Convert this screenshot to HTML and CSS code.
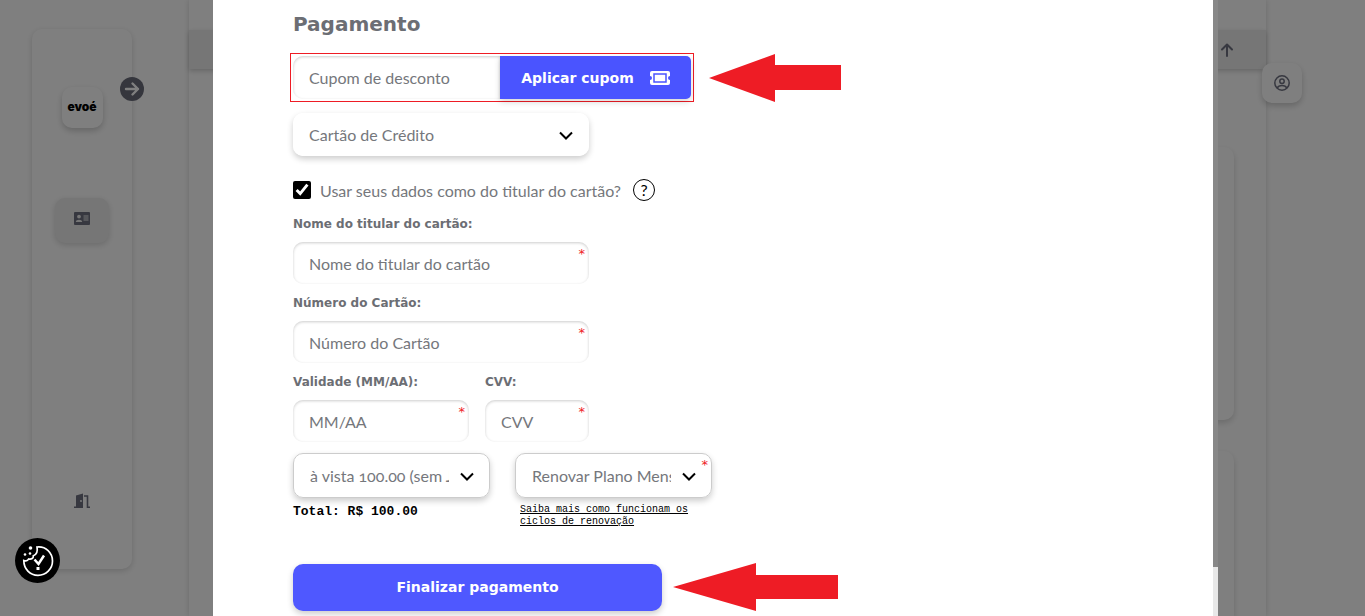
FILE: index.html
```html
<!DOCTYPE html>
<html lang="pt-BR">

<head>
    <meta charset="UTF-8">
    <meta name="viewport" content="width=device-width, initial-scale=1.0">
    <title>Pagamento</title>
    <link rel="stylesheet" href="styles.css">
</head>

<body>
    <div class="app">
        <aside class="sidebar">
            <div class="logo">evoé</div>
            <button type="button" class="expand" aria-label="Expandir menu">
                <svg width="24" height="24" viewBox="0 0 24 24">
                    <circle cx="12" cy="12" r="12" fill="#6a6c7a" />
                    <path d="M6 12h12M12.500 6.500L18 12l-5.500 5.500" fill="none" stroke="#fff" stroke-width="2.400" stroke-linecap="round" stroke-linejoin="round" />
                </svg>
            </button>
            <button type="button" class="menu-item" aria-label="Perfil">
                <svg width="16" height="13" viewBox="0 0 16 13">
                    <rect width="16" height="13" rx="1" fill="#6e7080" />
                    <circle cx="5" cy="4.600" r="1.900" fill="#ececec" />
                    <path d="M1.800 10c0-3 6.400-3 6.400 0zM9.500 3.500h5v1h-5zM9.500 5.500h5v1h-5zM9.500 7.500h5v1h-5z" fill="#ececec" />
                </svg>
            </button>
            <button type="button" class="exit" aria-label="Sair">
                <svg width="16" height="16" viewBox="0 0 16 16">
                    <path d="M2 2.500L9 0.500V15H0v-1.500h2z" fill="#6e7080" />
                    <path d="M10 3h3.500v11.200H16" fill="none" stroke="#6e7080" stroke-width="1.600" />
                    <circle cx="7" cy="8" r="0.900" fill="#fff" />
                </svg>
            </button>
        </aside>
        <main class="content">
            <div class="topbar">
                <svg width="14" height="14" viewBox="0 0 14 14">
                    <path d="M7 13V2M2 6.500l5-5 5 5" fill="none" stroke="#6e7080" stroke-width="2" stroke-linecap="round" stroke-linejoin="round" />
                </svg>
            </div>
            <div class="card"></div>
            <div class="card card-last"></div>
            <button type="button" class="user" aria-label="Minha conta">
                <svg width="16" height="16" viewBox="0 0 16 16" fill="none" stroke="#6e7080" stroke-width="1.500">
                    <circle cx="8" cy="8" r="7.200" />
                    <circle cx="8" cy="6.200" r="2.200" />
                    <path d="M3.300 13c1.500-3.200 7.900-3.200 9.400 0" />
                </svg>
            </button>
        </main>
    </div>

    <div class="overlay">
        <div class="modal">
            <form class="payment">
                <h2>Pagamento</h2>

                <div class="row">
                    <div class="coupon">
                        <input type="text" class="field" placeholder="Cupom de desconto" aria-label="Cupom de desconto">
                        <button type="button" class="apply">
                            Aplicar cupom
                            <svg width="20" height="14" viewBox="0 0 20 14">
                                <path d="M2 0h16a2 2 0 0 1 2 2v3a2 2 0 0 0 0 4v3a2 2 0 0 1-2 2H2a2 2 0 0 1-2-2V9a2 2 0 0 0 0-4V2a2 2 0 0 1 2-2z" fill="#fff" />
                                <rect x="4" y="3" width="12" height="8" fill="none" stroke="#4a54ff" stroke-width="1.500" />
                            </svg>
                        </button>
                    </div>
                    <svg class="arrow" width="132" height="49" viewBox="0 0 132 49">
                        <path d="M0 25L66 1v11h66v25H66v12z" fill="#ee1c25" />
                    </svg>
                </div>

                <div class="select method">
                    <select aria-label="Forma de pagamento">
                        <option>Cartão de Crédito</option>
                    </select>
                    <svg class="chevron" width="14" height="9" viewBox="0 0 14 9">
                        <path d="M1 1.500l6 6 6-6" />
                    </svg>
                </div>

                <div class="holder">
                    <input type="checkbox" id="holder" checked>
                    <label for="holder">Usar seus dados como do titular do cartão?</label>
                    <button type="button" class="help" aria-label="Ajuda">?</button>
                </div>

                <div class="group">
                    <label for="name">Nome do titular do cartão:</label>
                    <div class="required">
                        <input type="text" class="field" id="name" placeholder="Nome do titular do cartão">
                    </div>
                </div>
                <div class="group">
                    <label for="number">Número do Cartão:</label>
                    <div class="required">
                        <input type="text" class="field" id="number" placeholder="Número do Cartão">
                    </div>
                </div>
                <div class="split">
                    <div class="group validity">
                        <label for="validity">Validade (MM/AA):</label>
                        <div class="required">
                            <input type="text" class="field" id="validity" placeholder="MM/AA">
                        </div>
                    </div>
                    <div class="group cvv">
                        <label for="cvv">CVV:</label>
                        <div class="required">
                            <input type="text" class="field" id="cvv" placeholder="CVV">
                        </div>
                    </div>
                </div>

                <div class="plans">
                    <div class="plan">
                        <div class="select bordered">
                            <select aria-label="Parcelas">
                                <option>à vista 100.00 (sem Juros)</option>
                            </select>
                            <svg class="chevron" width="14" height="9" viewBox="0 0 14 9">
                                <path d="M1 1.500l6 6 6-6" />
                            </svg>
                        </div>
                        <p class="total">Total: R$ 100.00</p>
                    </div>
                    <div class="plan">
                        <div class="select bordered required">
                            <select aria-label="Renovação">
                                <option>Renovar Plano Mensalmente</option>
                            </select>
                            <svg class="chevron" width="14" height="9" viewBox="0 0 14 9">
                                <path d="M1 1.500l6 6 6-6" />
                            </svg>
                        </div>
                        <a href="#" class="cycles">Saiba mais como funcionam os ciclos de renovação</a>
                    </div>
                </div>

                <div class="row">
                    <button type="submit" class="submit">Finalizar pagamento</button>
                    <svg class="arrow" width="165" height="48" viewBox="0 0 165 48">
                        <path d="M0 24L83 0v12h82v24H83v12z" fill="#ee1c25" />
                    </svg>
                </div>
            </form>
            <div class="scroll">
                <div class="thumb"></div>
            </div>
        </div>
    </div>

    <button type="button" class="cookie" aria-label="Preferências de cookies">
        <svg width="45" height="45" viewBox="0 0 45 45">
            <circle cx="22.500" cy="22.500" r="22.500" fill="#000" />
            <path d="M22 9c9-1 15.500 6 15.500 14S31 37.300 23 37.300 8.800 31 8.800 22.500c2 .8 4 .3 4.800-1.500 3 .7 5-.8 4.700-3.200 3-1 4.500-4.500 3.700-8.800z" fill="none" stroke="#fff" stroke-width="1.700" />
            <path d="M19.500 21.500l4 4.500 5.500-8.500" fill="none" stroke="#fff" stroke-width="2.500" />
            <path d="M21.500 29h3v3h-3z" fill="#fff" />
            <circle cx="15.500" cy="10" r="1.800" fill="#fff" />
            <circle cx="10" cy="16.500" r="1.300" fill="#fff" />
            <circle cx="15" cy="15.500" r="1.300" fill="#fff" />
        </svg>
    </button>
</body>

</html>
```
FILE: styles.css
```css
* {
    box-sizing: border-box;
}

body {
    margin: 0;
    height: 100vh;
    overflow: hidden;
    font-family: Lato, sans-serif;
    font-size: 16px;
    color: #6c6e74;
    background-color: #fff;
}

button {
    padding: 0;
    border: none;
    background: none;
    font-family: inherit;
}

svg {
    display: block;
    flex-shrink: 0;
}

/* page behind the modal */
.app {
    display: flex;
    gap: 57px;
    height: 100vh;
    padding: 0 99px 0 32px;
}

.sidebar {
    position: relative;
    display: flex;
    flex-direction: column;
    align-items: center;
    width: 100px;
    margin: 29px 0 47px;
    padding: 58px 0 60px;
    border-radius: 10px;
    box-shadow: 0 2px 6px rgba(0, 0, 0, 0.16);
}

.logo {
    width: 41px;
    height: 41px;
    border-radius: 10px;
    box-shadow: 0 3px 6px rgba(0, 0, 0, 0.2);
    color: #000;
    font-family: Inter, sans-serif;
    font-size: 12px;
    font-weight: 900;
    line-height: 40px;
    text-align: center;
}

.expand {
    position: absolute;
    top: 48px;
    right: -12px;
}

.menu-item {
    display: flex;
    justify-content: center;
    width: 54px;
    height: 45px;
    margin-top: 70px;
    padding-top: 14px;
    border-radius: 10px;
    background-color: #ececec;
    box-shadow: 0 2px 6px rgba(0, 0, 0, 0.16);
}

.exit {
    margin-top: auto;
}

.content {
    position: relative;
    display: flex;
    flex: 1;
    flex-direction: column;
    padding-top: 30px;
    box-shadow: 0 0 6px rgba(0, 0, 0, 0.16);
}

.topbar {
    display: flex;
    justify-content: flex-end;
    align-items: center;
    height: 39px;
    padding-right: 32px;
    background-color: #ececec;
    box-shadow: 0 2px 5px rgba(0, 0, 0, 0.2);
}

.card {
    height: 273px;
    margin: 78px 32px 0;
    border-radius: 10px;
    box-shadow: 0 3px 6px rgba(0, 0, 0, 0.16);
}

.card-last {
    flex: 1;
    margin-top: 31px;
    border-radius: 10px 10px 0 0;
}

.user {
    position: absolute;
    top: 63px;
    right: -36px;
    display: flex;
    justify-content: center;
    align-items: center;
    width: 40px;
    height: 40px;
    border-radius: 10px;
    background-color: #fff;
    box-shadow: 0 3px 6px rgba(0, 0, 0, 0.2);
}

/* modal */
.overlay {
    position: fixed;
    inset: 0;
    padding: 0 147px 0 213px;
    background-color: rgba(0, 0, 0, 0.5);
}

.modal {
    display: flex;
    height: 100%;
    overflow: hidden;
    background-color: #fff;
}

.payment {
    flex: 1;
    padding: 12px 80px 0;
}

.scroll {
    width: 5px;
    background-color: #e8e8e8;
}

.thumb {
    height: 92%;
    background-color: #888;
}

h2 {
    margin: 0 0 17px;
    font-family: "DejaVu Sans", sans-serif;
    font-size: 20px;
    line-height: 24px;
}

.row {
    display: flex;
    align-items: center;
}

.coupon {
    display: flex;
    width: 404px;
    height: 49px;
    margin-left: -3px;
    padding: 2px;
    border: 1px solid #ee1c25;
}

.field {
    width: 100%;
    height: 42px;
    padding: 0 16px;
    border: none;
    border-radius: 10px;
    outline: none;
    background-color: #fff;
    box-shadow: inset 0 1px 3px rgba(0, 0, 0, 0.2);
    font-family: inherit;
    font-size: 16px;
}

.field::placeholder {
    color: #75777c;
}

.coupon .field {
    flex: 1;
    height: 43px;
    border-radius: 10px 0 0 10px;
}

.apply {
    display: flex;
    justify-content: center;
    align-items: center;
    gap: 16px;
    width: 191px;
    border-radius: 0 5px 5px 0;
    background-color: #4a54ff;
    box-shadow: 0 3px 6px rgba(0, 0, 0, 0.16);
    color: #fff;
    font-family: "DejaVu Sans", sans-serif;
    font-size: 14px;
    font-weight: bold;
}

.arrow {
    margin-left: 15px;
}

.select {
    position: relative;
    border-radius: 10px;
    box-shadow: 0 3px 6px rgba(0, 0, 0, 0.2);
}

.select select {
    display: block;
    width: 100%;
    height: 43px;
    padding: 0 40px 0 16px;
    border: none;
    border-radius: 10px;
    appearance: none;
    background-color: #fff;
    color: #75777c;
    font-family: inherit;
    font-size: 16px;
    font-variant-numeric: oldstyle-nums;
}

.bordered select {
    height: 45px;
    border: 1px solid #ccc;
}

.chevron {
    position: absolute;
    top: 50%;
    right: 16px;
    margin-top: -4px;
    pointer-events: none;
}

.chevron path {
    fill: none;
    stroke: #000;
    stroke-width: 2;
}

.method {
    width: 296px;
    margin-top: 11px;
}

.holder {
    display: flex;
    align-items: center;
    height: 22px;
    margin: 23px 0 15px;
    color: #75777c;
}

.holder input {
    width: 18px;
    height: 18px;
    margin: 0 9px 0 0;
    accent-color: #000;
}

.help {
    width: 22px;
    height: 22px;
    margin-left: 12px;
    border: 1px solid #000;
    border-radius: 50%;
    color: #000;
    font-size: 16px;
    line-height: 20px;
}

.group {
    width: 296px;
    margin-bottom: 11px;
}

.group label {
    display: block;
    margin-bottom: 10px;
    font-family: "DejaVu Sans", sans-serif;
    font-size: 12px;
    font-weight: bold;
    line-height: 16px;
}

.required {
    position: relative;
}

.required::after {
    content: "*";
    position: absolute;
    top: 4px;
    right: 4px;
    color: #ee1c25;
    font-family: "DejaVu Sans", sans-serif;
    font-size: 13px;
    line-height: 16px;
}

.split {
    display: flex;
    gap: 16px;
    margin-bottom: 11px;
}

.split .group {
    margin-bottom: 0;
}

.split .validity {
    width: 176px;
}

.split .cvv {
    width: 104px;
}

.plans {
    display: flex;
    gap: 25px;
    margin-bottom: 35px;
}

.plan {
    width: 197px;
    color: #000;
    font-family: "Liberation Mono", monospace;
}

.plan .select {
    margin-bottom: 6px;
    font-family: Lato, sans-serif;
}

.total {
    margin: 0;
    font-size: 13px;
    font-weight: bold;
    line-height: 16px;
}

.cycles {
    display: block;
    padding: 0 5px;
    color: #000;
    font-size: 10px;
    line-height: 12px;
}

.submit {
    width: 369px;
    height: 47px;
    border-radius: 10px;
    background-color: #4f58ff;
    box-shadow: 0 3px 6px rgba(0, 0, 0, 0.2);
    color: #fff;
    font-family: "DejaVu Sans", sans-serif;
    font-size: 14px;
    font-weight: bold;
}

.submit + .arrow {
    margin-left: 11px;
}

.cookie {
    position: fixed;
    left: 15px;
    bottom: 33px;
}
```
